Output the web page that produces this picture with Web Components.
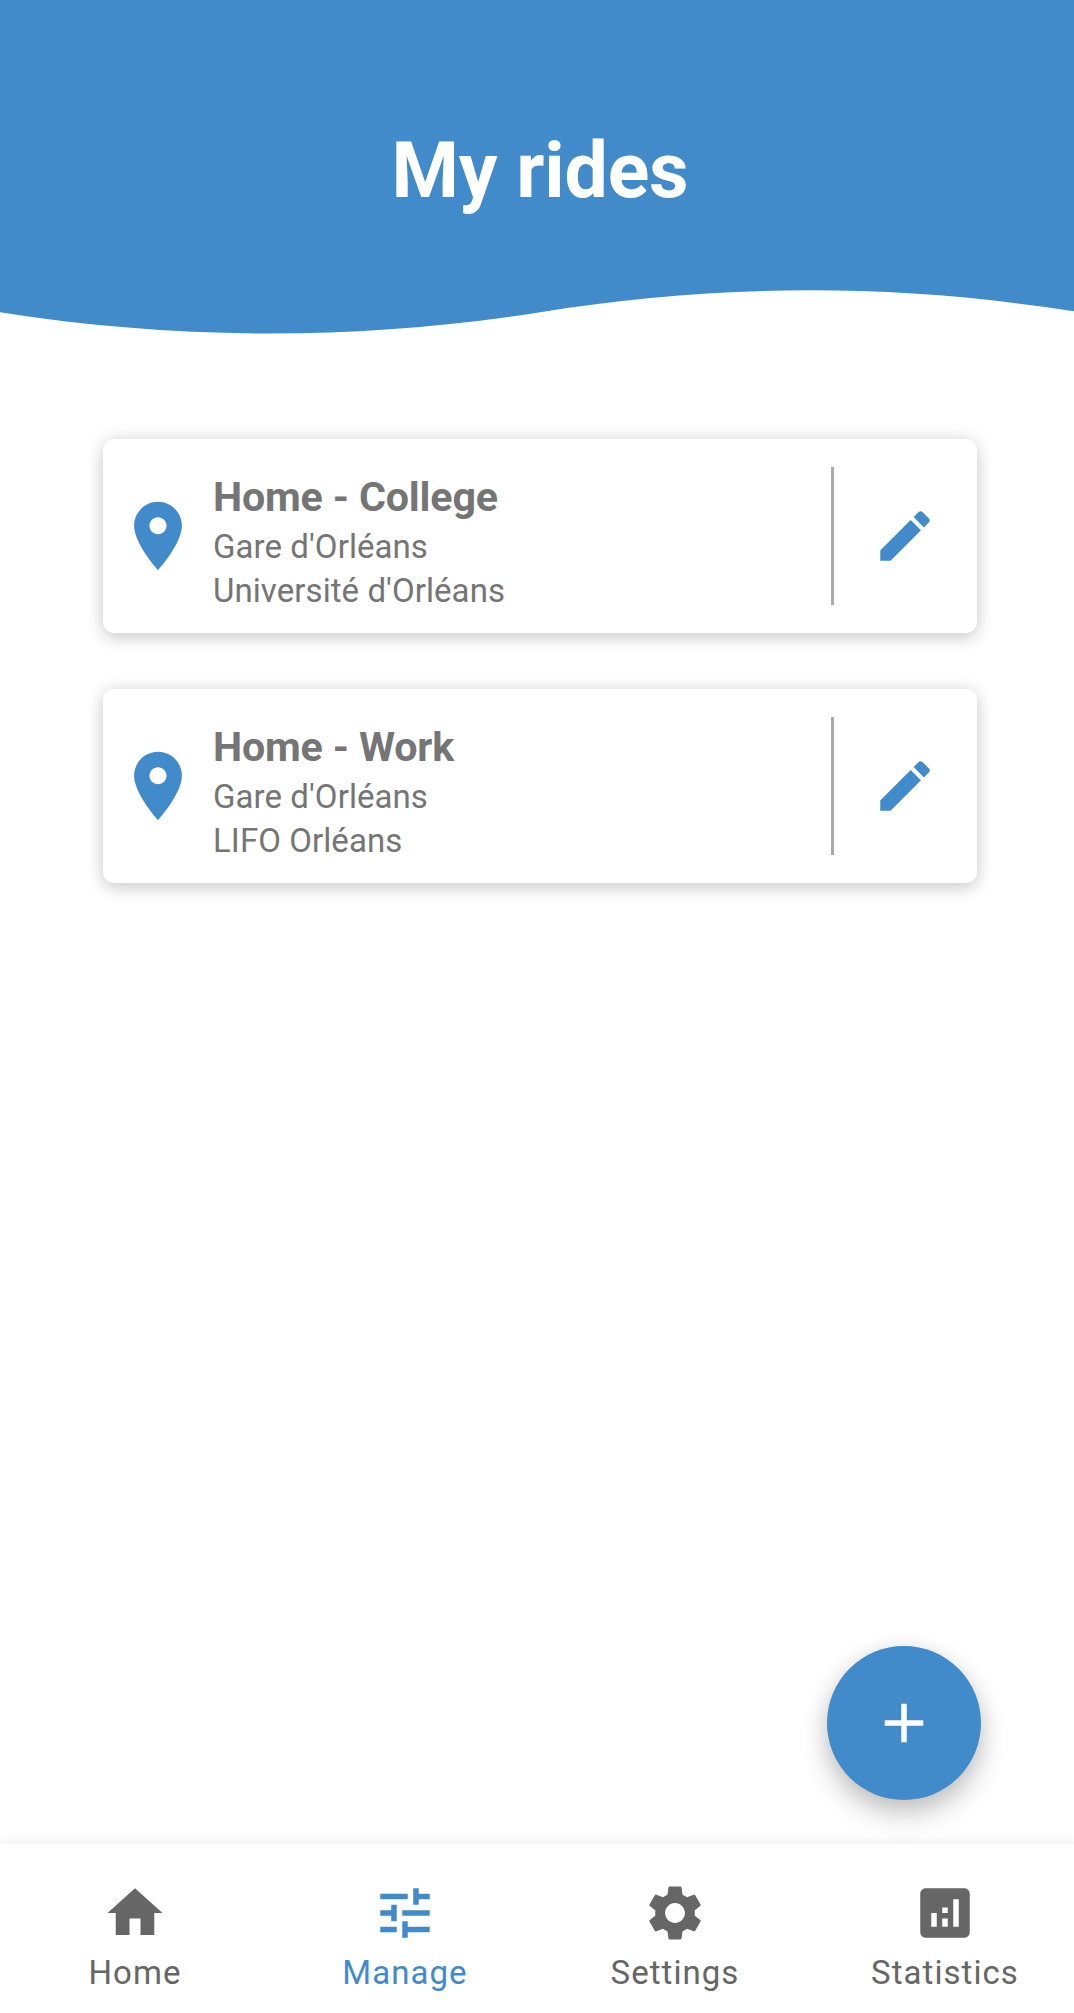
<!DOCTYPE html>
<html lang="en">
<head>
<meta charset="utf-8">
<title>My rides</title>
<style>
body{margin:0;background:#fff;font-family:Roboto,"Liberation Sans",sans-serif;}
</style>
</head>
<body>
<rides-app></rides-app>
<script>
const define = (name, html) => customElements.define(name, class extends HTMLElement {
  constructor() {
    super();
    const t = document.createElement('template');
    t.innerHTML = html;
    this.attachShadow({mode: 'open'}).appendChild(t.content.cloneNode(true));
  }
});

const ICONS = {
  place: 'M12 2C8.13 2 5 5.13 5 9c0 5.25 7 13 7 13s7-7.75 7-13c0-3.87-3.13-7-7-7zm0 9.5c-1.38 0-2.5-1.12-2.5-2.5s1.12-2.5 2.5-2.5 2.5 1.12 2.5 2.5-1.12 2.5-2.5 2.5z',
  edit: 'M3 17.25V21h3.75L17.81 9.94l-3.75-3.75L3 17.25zM20.71 7.04c.39-.39.39-1.02 0-1.41l-2.34-2.34c-.39-.39-1.02-.39-1.41 0l-1.83 1.83 3.75 3.75 1.83-1.83z',
  add: 'M19 13h-6v6h-2v-6H5v-2h6V5h2v6h6v2z',
  home: 'M10 20v-6h4v6h5v-8h3L12 3 2 12h3v8z',
  tune: 'M3 17v2h6v-2H3zM3 5v2h10V5H3zm10 16v-2h8v-2h-8v-2h-2v6h2zM7 9v2H3v2h4v2h2V9H7zm14 4v-2H11v2h10zm-6-4h2V7h4V5h-4V3h-2v6z',
  settings: 'M19.14 12.94c.04-.3.06-.61.06-.94 0-.32-.02-.64-.07-.94l2.03-1.58c.18-.14.23-.41.12-.61l-1.92-3.32c-.12-.22-.37-.29-.59-.22l-2.39.96c-.5-.38-1.03-.7-1.62-.94l-.36-2.54c-.04-.24-.24-.41-.48-.41h-3.84c-.24 0-.43.17-.47.41l-.36 2.54c-.59.24-1.13.57-1.62.94l-2.39-.96c-.22-.08-.47 0-.59.22L2.74 8.87c-.12.21-.08.47.12.61l2.03 1.58c-.05.3-.09.63-.09.94s.02.64.07.94l-2.03 1.58c-.18.14-.23.41-.12.61l1.92 3.32c.12.22.37.29.59.22l2.39-.96c.5.38 1.03.7 1.62.94l.36 2.54c.05.24.24.41.48.41h3.84c.24 0 .44-.17.47-.41l.36-2.54c.59-.24 1.13-.56 1.62-.94l2.39.96c.22.08.47 0 .59-.22l1.92-3.32c.12-.22.07-.47-.12-.61l-2.01-1.58zM12 15.6c-1.98 0-3.6-1.62-3.6-3.6s1.62-3.6 3.6-3.6 3.6 1.62 3.6 3.6-1.62 3.6-3.6 3.6z',
  stats: 'M19 3H5c-1.1 0-2 .9-2 2v14c0 1.1.9 2 2 2h14c1.1 0 2-.9 2-2V5c0-1.1-.9-2-2-2zM9 17H7v-5h2v5zm4 0h-2v-3h2v3zm0-5h-2v-2h2v2zm4 5h-2V7h2v10z'
};

customElements.define('md-icon', class extends HTMLElement {
  constructor() { super(); this.attachShadow({mode: 'open'}); }
  connectedCallback() {
    this.shadowRoot.innerHTML = `<style>:host{display:block;flex:none;width:66px;height:66px}
      svg{display:block;width:100%;height:100%;fill:currentColor}</style>
      <svg viewBox="0 0 24 24" aria-hidden="true"><path d="${ICONS[this.getAttribute('name')]}"/></svg>`;
  }
});

define('wave-header', `<style>
  :host{display:block;color:#fff}
  .bar{box-sizing:border-box;height:290px;padding-top:126px;background:#428bca}
  h1{margin:0 0 0 6px;font-size:77px;line-height:90px;font-weight:700;text-align:center;letter-spacing:-.2px}
  svg{display:block;width:100%;height:45px;fill:#428bca}
  </style>
  <div class="bar"><h1><slot></slot></h1></div>
  <svg viewBox="0 0 1074 45" preserveAspectRatio="none"><path d="M0 -1V22.3C179 50.5 358 50.5 537 22.7C716 -6.9 895 -6.9 1074 21.3V-1Z"/></svg>`);

define('ride-card', `<style>
  :host{display:flex;box-sizing:border-box;height:194px;background:#fff;border-radius:11px;color:#757575;
    box-shadow:0 6px 16px rgba(0,0,0,.13),0 0 20px rgba(0,0,0,.11)}
  .pin{align-self:center;width:82px;height:82px;margin:0 .5px 0 14px;color:#428bca}
  .text{flex:1;padding:34px 0 0 13.5px}
  .name{font-size:41.25px;line-height:48px;font-weight:700;margin-bottom:4px;letter-spacing:-.18px}
  .stop{font-size:33px;line-height:44px;letter-spacing:.07px}
  .rule{align-self:center;width:3px;height:138px;background:#aaa}
  .edit{align-self:center;margin:0 39px 0 38px;color:#428bca}
  </style>
  <md-icon class="pin" name="place"></md-icon>
  <div class="text">
    <div class="name"><slot name="name"></slot></div>
    <div class="stop"><slot name="from"></slot></div>
    <div class="stop"><slot name="to"></slot></div>
  </div>
  <div class="rule"></div>
  <md-icon class="edit" name="edit"></md-icon>`);

define('add-button', `<style>
  :host{display:flex;align-items:center;justify-content:center;width:154px;height:154px;border-radius:50%;
    background:#428bca;color:#fff;box-shadow:0 14px 28px rgba(0,0,0,.22),0 2px 20px rgba(0,0,0,.08)}
  </style><md-icon name="add"></md-icon>`);

customElements.define('nav-tab', class extends HTMLElement {
  constructor() { super(); this.attachShadow({mode: 'open'}); }
  connectedCallback() {
    this.shadowRoot.innerHTML = `<style>
      :host{flex:1;display:flex;flex-direction:column;align-items:center;padding-top:36px;color:#666;
        font-size:33px;line-height:40px;letter-spacing:1.05px}
      :host([active]){color:#428bca}
      span{margin-top:7px}</style>
      <md-icon name="${this.getAttribute('icon')}"></md-icon><span><slot></slot></span>`;
  }
});

define('bottom-nav', `<style>
  :host{display:flex;position:relative;z-index:2;width:1080px;height:169px;background:#fff;box-shadow:0 0 12px rgba(0,0,0,.1)}
  </style><slot></slot>`);

define('rides-app', `<style>
  :host{display:flex;flex-direction:column;position:relative;width:1074px;height:2013px;overflow:hidden}
  main{flex:1;display:flex;flex-direction:column;gap:56px;padding:104px 97px 0 103px}
  add-button{position:absolute;right:93px;bottom:213px;z-index:1}
  </style>
  <wave-header>My rides</wave-header>
  <main>
    <ride-card><span slot="name">Home - College</span><span slot="from">Gare d'Orléans</span><span slot="to">Université d'Orléans</span></ride-card>
    <ride-card><span slot="name">Home - Work</span><span slot="from">Gare d'Orléans</span><span slot="to">LIFO Orléans</span></ride-card>
  </main>
  <add-button role="button" aria-label="Add ride"></add-button>
  <bottom-nav>
    <nav-tab icon="home">Home</nav-tab>
    <nav-tab icon="tune" active>Manage</nav-tab>
    <nav-tab icon="settings">Settings</nav-tab>
    <nav-tab icon="stats">Statistics</nav-tab>
  </bottom-nav>`);
</script>
</body>
</html>
